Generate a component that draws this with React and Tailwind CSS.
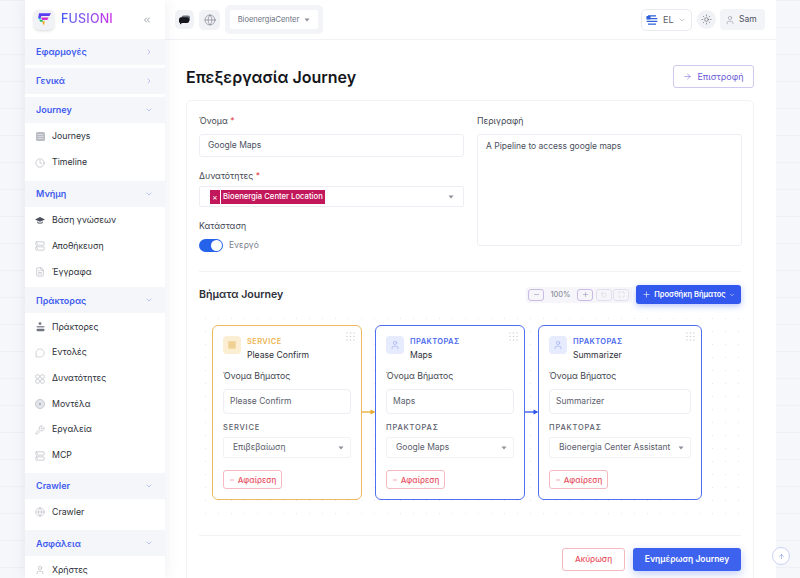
import React from 'react';
import {
  ChevronRight, ChevronDown, ChevronsLeft, Clock, FileText, MessageCircle, Wrench,
  Server, Globe, User, Sun, ArrowRight, Plus, Minus, RotateCcw, Maximize, ArrowUp,
} from 'lucide-react';

const RowsIcon = () => (
  <svg width="9" height="9" viewBox="0 0 9 9">
    <rect width="9" height="9" rx="1.5" fill="#b9bcc4" />
    <path d="M1.5 2.5h6M1.5 4.5h6M1.5 6.5h6" stroke="#e8e9ed" strokeWidth="0.6" />
  </svg>
);

const CapIcon = () => (
  <svg width="10" height="9" viewBox="0 0 10 9">
    <path d="M5 1 10 3.4 5 5.8 0 3.4Z" fill="#4b505c" />
    <path d="M2 5.3v1.6c1.8 1.3 4.2 1.3 6 0V5.3L5 6.8Z" fill="#8b8f9a" />
  </svg>
);

const AgentsIcon = () => (
  <svg width="9" height="10" viewBox="0 0 9 10">
    <circle cx="4" cy="1.6" r="1.4" fill="#6f7480" />
    <rect x="0.5" y="3.9" width="8" height="1.6" rx="0.8" fill="#8b8f9a" />
    <rect x="0.5" y="6.8" width="8" height="2.4" rx="1.2" fill="#6f7480" />
  </svg>
);

const CirclesIcon = () => (
  <svg width="10" height="10" viewBox="0 0 10 10" fill="none" stroke="#b9bcc4" strokeWidth="0.7">
    <circle cx="2.6" cy="2.6" r="2" />
    <circle cx="7.4" cy="2.6" r="2" />
    <circle cx="2.6" cy="7.4" r="2" />
    <circle cx="7.4" cy="7.4" r="2" />
  </svg>
);

const ModelIcon = () => (
  <svg width="10" height="10" viewBox="0 0 10 10">
    <circle cx="5" cy="5" r="4.6" fill="#e3e4e9" stroke="#b9bcc4" strokeWidth="0.7" />
    <circle cx="5" cy="5" r="0.9" fill="#9a9ea8" />
  </svg>
);

const LogoIcon = () => (
  <svg width="15" height="15" viewBox="0 0 15 15">
    <path d="M2 1.2h12L12.4 4H4.4L3.6 6H1.2Z" fill="#5b3df0" />
    <path d="M1.2 6h2.4l.8 1.6H2Z" fill="#19b5e8" />
    <path d="M4.2 5.4h7.4L10.2 8H5Z" fill="#d62fd0" />
    <path d="M2.4 8h3l1.2 1.8H3.2Z" fill="#22c55e" />
    <path d="M5.2 9.4h2.6L6.8 13.6Z" fill="#f59e0b" />
  </svg>
);

const ChatBlob = () => (
  <svg width="11" height="10" viewBox="0 0 11 10">
    <rect x="2.5" y="0.5" width="8.5" height="6" rx="2" fill="#6b7280" />
    <path d="M2.5 2.3h5.6a2 2 0 0 1 2 2v1.7a2 2 0 0 1-2 2H3L1 9.6V8A2 2 0 0 1 0 6V4.3a2 2 0 0 1 2.5-2Z" fill="#15171c" />
  </svg>
);

const FlagIcon = () => (
  <svg width="12" height="12" viewBox="0 0 12 12">
    <circle cx="6" cy="6" r="5.5" fill="#fff" />
    <path d="M2 1.9h8M.7 4.6h10.6M.7 7.4h10.6M2 10.1h8" stroke="#2f5fd8" strokeWidth="1.4" />
    <rect x="0.5" y="2" width="4" height="3.4" fill="#2f5fd8" />
  </svg>
);

const ServiceIcon = () => (
  <svg width="10" height="10" viewBox="0 0 10 10">
    <rect x="1" y="1" width="8" height="8" rx="1" fill="#f3d9a4" />
    <path d="M2 3h6M2 5h6M2 7h6" stroke="#e9c27a" strokeWidth="0.7" />
  </svg>
);

const GripDots = () => (
  <svg width="9" height="9" viewBox="0 0 9 9" fill="#c9ccd3">
    {[1, 4.5, 8].map((y) =>
      [1, 4.5, 8].map((x) => <rect key={`${x}-${y}`} x={x - 0.6} y={y - 0.6} width="1.2" height="1.2" />)
    )}
  </svg>
);

const Caret = () => (
  <svg width="6" height="4" viewBox="0 0 6 4" className="shrink-0">
    <path d="M0.5 0.5h5L3 3.5Z" fill="#8b8f9a" />
  </svg>
);

const iconCls = 'text-[#a9adb6]';

const menu = [
  { title: 'Εφαρμογές', open: false },
  { title: 'Γενικά', open: false },
  {
    title: 'Journey', open: true, pad: 'pb-[5.5px]', items: [
      { label: 'Journeys', icon: <RowsIcon /> },
      { label: 'Timeline', icon: <Clock size={10} strokeWidth={1.4} className={iconCls} /> },
    ],
  },
  {
    title: 'Μνήμη', open: true, pad: 'pb-[2.5px]', items: [
      { label: 'Βάση γνώσεων', icon: <CapIcon /> },
      { label: 'Αποθήκευση', icon: <Server size={10} strokeWidth={1.4} className={iconCls} /> },
      { label: 'Έγγραφα', icon: <FileText size={10} strokeWidth={1.4} className={iconCls} /> },
    ],
  },
  {
    title: 'Πράκτορας', open: true, pad: 'pb-[4px]', items: [
      { label: 'Πράκτορες', icon: <AgentsIcon /> },
      { label: 'Εντολές', icon: <MessageCircle size={10} strokeWidth={1.2} className={iconCls} /> },
      { label: 'Δυνατότητες', icon: <CirclesIcon /> },
      { label: 'Μοντέλα', icon: <ModelIcon /> },
      { label: 'Εργαλεία', icon: <Wrench size={10} strokeWidth={1.4} className={iconCls} /> },
      { label: 'MCP', icon: <Server size={10} strokeWidth={1.4} className={iconCls} /> },
    ],
  },
  {
    title: 'Crawler', open: true, pad: 'pb-[5px]', items: [
      { label: 'Crawler', icon: <Globe size={10} strokeWidth={1.2} className={iconCls} /> },
    ],
  },
  {
    title: 'Ασφάλεια', open: true, pad: 'pb-[6px]', items: [
      { label: 'Χρήστες', icon: <User size={10} strokeWidth={1.4} className={iconCls} /> },
    ],
  },
];

const steps = [
  {
    kind: 'SERVICE', name: 'Please Confirm', selectLabel: 'SERVICE', selected: 'Επιβεβαίωση', width: 'w-[149.5px]',
    border: 'border-[#ecb95f]', kindColor: 'text-[#edb44f]', iconBox: 'bg-[#fbeed3]', service: true,
  },
  {
    kind: 'ΠΡΑΚΤΟΡΑΣ', name: 'Maps', selectLabel: 'ΠΡΑΚΤΟΡΑΣ', selected: 'Google Maps', width: 'w-[149.5px]',
    border: 'border-[#4f6ef0]', kindColor: 'text-[#4a69ee]', iconBox: 'bg-[#e6ebfd]',
  },
  {
    kind: 'ΠΡΑΚΤΟΡΑΣ', name: 'Summarizer', selectLabel: 'ΠΡΑΚΤΟΡΑΣ', selected: 'Bioenergia Center Assistant', width: 'w-[164px]',
    border: 'border-[#4f6ef0]', kindColor: 'text-[#4a69ee]', iconBox: 'bg-[#e6ebfd]',
  },
];

const Sidebar = () => (
  <aside className="w-[140px] h-[578px] shrink-0 bg-white overflow-hidden shadow-[0_0_14px_rgba(80,90,130,0.10)] z-10">
    <div className="h-[39px] flex items-center pl-[9px] pr-[13px]">
      <div className="w-[20px] h-[20px] rounded-[5px] bg-[#f1f2f5] shadow-[0_1px_3px_rgba(0,0,0,0.15)] flex items-center justify-center">
        <LogoIcon />
      </div>
      <span className="ml-[7px] text-[12.5px] font-medium tracking-[0.2px] bg-linear-to-r from-[#3f5cf6] to-[#c92fe6] bg-clip-text text-transparent">
        FUSIONI
      </span>
      <ChevronsLeft size={10} strokeWidth={1.6} className="ml-auto text-[#6b7280]" />
    </div>
    {menu.map((section) => (
      <div key={section.title} className={section.open ? '' : 'mb-[3px]'}>
        <div className="h-[26px] bg-[#f5f6fa] flex items-center justify-between pl-[11px] pr-[12px]">
          <span className="text-[9px] font-semibold text-[#3f5cf0]">{section.title}</span>
          {section.open
            ? <ChevronDown size={8} className="text-[#9aa7f0]" />
            : <ChevronRight size={8} className="text-[#9aa7f0]" />}
        </div>
        {section.items && (
          <div className={`pt-[1px] ${section.pad}`}>
            {section.items.map((item) => (
              <div key={item.label} className="h-[25.7px] flex items-center pl-[10px]">
                <span className="w-[10px] flex justify-center">{item.icon}</span>
                <span className="ml-[7px] text-[8.75px] text-[#2d3038]">{item.label}</span>
              </div>
            ))}
          </div>
        )}
      </div>
    ))}
  </aside>
);

const TopBar = () => (
  <header className="h-[40px] shrink-0 flex items-center border-b border-[#f1f2f6] pl-[10px] pr-[11px]">
    <div className="w-[19px] h-[19px] rounded-[5px] bg-[#f1f2f6] flex items-center justify-center">
      <ChatBlob />
    </div>
    <div className="ml-[5px] w-[21px] h-[20px] rounded-[5px] bg-[#f1f2f6] flex items-center justify-center">
      <Globe size={12} strokeWidth={1} className="text-[#5b606c]" />
    </div>
    <div className="ml-[5px] p-[5px] rounded-[5px] bg-[#f3f4f8]">
      <div className="w-[88px] h-[19px] bg-white rounded-[2px] flex items-center justify-center gap-[5px]">
        <span className="text-[7.5px] text-[#6b7280]">BioenergiaCenter</span>
        <Caret />
      </div>
    </div>
    <div className="ml-auto w-[51px] h-[22px] border border-[#e9ebf0] rounded-[5px] flex items-center pl-[4px] pr-[5px]">
      <FlagIcon />
      <span className="ml-[5px] text-[9px] text-[#5b606c]">EL</span>
      <ChevronDown size={8} className="ml-auto text-[#a9adb6]" />
    </div>
    <div className="ml-[5px] w-[19px] h-[19px] rounded-full bg-[#f1f2f6] flex items-center justify-center">
      <Sun size={11} strokeWidth={1.2} className="text-[#4b5060]" />
    </div>
    <div className="ml-[4px] w-[45px] h-[21px] rounded-[4px] bg-[#f3f4f8] flex items-center pl-[5px]">
      <User size={10} strokeWidth={1.3} className="text-[#8b8f9a]" />
      <span className="ml-[4px] text-[8.5px] text-[#4b5060]">Sam</span>
    </div>
  </header>
);

const Field = ({ label, required, className, children }) => (
  <div className={className}>
    <label className="block text-[8.75px] leading-[12px] text-[#444852]">
      {label}{required && <span className="text-[#e5484d]"> *</span>}
    </label>
    {children}
  </div>
);

const StepCard = ({ step }) => (
  <div className={`${step.width} h-[175px] shrink-0 relative border-[1.5px] ${step.border} rounded-[6px] bg-white pt-[10px] px-[10px]`}>
    <span className="absolute top-[6px] right-[6px]"><GripDots /></span>
    <div className="flex items-start gap-[6px]">
      <div className={`w-[18px] h-[18px] rounded-[4px] ${step.iconBox} flex items-center justify-center`}>
        {step.service
          ? <ServiceIcon />
          : <User size={10} strokeWidth={1.3} className="text-[#8ea1f2]" />}
      </div>
      <div>
        <div className={`text-[7.5px] leading-[12px] font-semibold tracking-[0.4px] ${step.kindColor}`}>{step.kind}</div>
        <div className="text-[8.6px] leading-[14px] text-[#2d3038]">{step.name}</div>
      </div>
    </div>
    <div className="mt-[8px] text-[8.75px] leading-[12px] text-[#444852]">Όνομα Βήματος</div>
    <div className="mt-[7px] h-[25px] border border-[#eceef3] rounded-[4px] flex items-center pl-[6px] text-[8.5px] text-[#5b606c]">
      {step.name}
    </div>
    <div className="mt-[8px] text-[7.5px] leading-[11px] font-medium tracking-[0.8px] text-[#5b606c]">{step.selectLabel}</div>
    <div className="mt-[4px] h-[21px] border border-[#f1f2f6] rounded-[2px] flex items-center justify-between pl-[9px] pr-[6px] text-[8.5px] text-[#5b606c] whitespace-nowrap">
      {step.selected}
      <Caret />
    </div>
    <button className="mt-[12px] w-[59px] h-[19px] border border-[#f6b9bf] rounded-[3px] flex items-center justify-center gap-[3px] text-[8px] font-medium text-[#e8505f]">
      <Minus size={6} strokeWidth={2} />
      Αφαίρεση
    </button>
  </div>
);

const Connector = ({ color }) => (
  <svg width="13.5" height="6" viewBox="0 0 13.5 6" className="shrink-0 mt-[84px]">
    <path d="M0 3h10" stroke={color} strokeWidth="1.3" />
    <path d="M8.5 0.5 13.5 3 8.5 5.5Z" fill={color} />
  </svg>
);

const ZoomBtn = ({ children, dim, className }) => (
  <span className={`w-[16px] h-[12px] border rounded-[3px] flex items-center justify-center ${className} ${dim ? 'border-[#e2deee] text-[#cfd2da]' : 'border-[#cbb9e6] text-[#9a93b5]'}`}>
    {children}
  </span>
);

export default function App() {
  return (
    <div className="w-[800px] h-[578px] overflow-hidden flex pl-[25px] font-[Inter,sans-serif] bg-[#f6f7fb] bg-[linear-gradient(#eef0f8_1px,transparent_1px)] bg-[size:100%_27px] relative">
      <Sidebar />
      <main className="w-[611px] h-[578px] shrink-0 flex flex-col bg-white">
        <TopBar />
        <div className="pl-[21px] pr-[22px]">
          <div className="h-[60px] flex items-center justify-between pt-[13px]">
            <h1 className="text-[16px] font-semibold text-[#14161b]">Επεξεργασία Journey</h1>
            <button className="w-[81px] h-[23px] border border-[#cfc8ef] rounded-[3px] flex items-center justify-center gap-[5px] text-[9px] text-[#6a5bd6]">
              <ArrowRight size={9} strokeWidth={1.4} />
              Επιστροφή
            </button>
          </div>
          <section className="border border-[#f1f2f6] rounded-[5px] h-[500px] pt-[14px] px-[12px]">
            <div className="grid grid-cols-[265px_265px] gap-x-[13px]">
              <div>
                <Field label="Όνομα" required>
                  <div className="mt-[7px] h-[23px] border border-[#eceef3] rounded-[3px] flex items-center pl-[8px] text-[8.5px] text-[#4b5060]">
                    Google Maps
                  </div>
                </Field>
                <Field label="Δυνατότητες" required className="mt-[13px]">
                  <div className="mt-[4px] h-[21px] border border-[#eceef3] rounded-[2px] flex items-center pl-[10px] pr-[9px]">
                    <span className="h-[14px] w-[10px] bg-[#c2185b] text-white text-[8px] flex items-center justify-center">×</span>
                    <span className="ml-[1px] h-[14px] px-[2px] bg-[#c2185b] text-white text-[7.7px] leading-[14px] font-medium whitespace-nowrap">
                      Bioenergia Center Location
                    </span>
                    <span className="ml-auto"><Caret /></span>
                  </div>
                </Field>
                <Field label="Κατάσταση" className="mt-[13px]">
                  <div className="mt-[7px] flex items-center">
                    <span className="w-[24px] h-[13px] rounded-full bg-[#2563eb] flex items-center justify-end pr-[1px]">
                      <span className="w-[11px] h-[11px] rounded-full bg-white" />
                    </span>
                    <span className="ml-[6px] text-[8.5px] text-[#7b7f8a]">Ενεργό</span>
                  </div>
                </Field>
              </div>
              <Field label="Περιγραφή">
                <div className="mt-[7px] h-[112px] border border-[#eceef3] rounded-[3px] pl-[8px] pt-[5px] text-[8.5px] text-[#4b5060]">
                  A Pipeline to access google maps
                </div>
              </Field>
            </div>

            <div className="mt-[19px] border-t border-[#f1f2f6] pt-[9px] flex items-center justify-between h-[37px]">
              <h2 className="text-[10.6px] font-semibold text-[#2d3038]">Βήματα Journey</h2>
              <div className="flex items-center gap-[4px]">
                <div className="h-[16px] rounded-[3px] bg-[#f6f6fa] flex items-center pl-[2px] pr-[3px]">
                  <ZoomBtn><Minus size={7} /></ZoomBtn>
                  <span className="w-[33px] text-center text-[7.5px] text-[#7b7f8a]">100%</span>
                  <ZoomBtn><Plus size={7} /></ZoomBtn>
                  <ZoomBtn dim className="ml-[3px]"><RotateCcw size={6} /></ZoomBtn>
                  <ZoomBtn dim className="ml-[1px]"><Maximize size={7} /></ZoomBtn>
                </div>
                <button className="w-[105px] h-[19px] rounded-[3px] bg-[#3358ee] shadow-[0_2px_6px_rgba(51,88,238,0.35)] flex items-center justify-center gap-[3px] text-[7.5px] font-semibold text-white whitespace-nowrap">
                  <Plus size={9} strokeWidth={1.6} />
                  Προσθήκη Βήματος
                  <ChevronDown size={6} />
                </button>
              </div>
            </div>

            <div className="mt-[4px] h-[213px] pt-[13px] pl-[13px] flex items-start bg-[radial-gradient(#e4e6ec_0.6px,transparent_0.7px)] bg-[size:13px_13px]">
              <StepCard step={steps[0]} />
              <Connector color="#e5a92e" />
              <StepCard step={steps[1]} />
              <Connector color="#2f55e8" />
              <StepCard step={steps[2]} />
            </div>

            <div className="mt-[10px] border-t border-[#f1f2f6] pt-[12px] flex justify-end gap-[8px]">
              <button className="w-[63px] h-[23px] border border-[#f6b9bf] rounded-[3px] text-[8.2px] font-medium text-[#e8505f]">Ακύρωση</button>
              <button className="w-[108px] h-[23px] rounded-[3px] bg-[#3d63ee] shadow-[0_3px_8px_rgba(51,88,238,0.3)] text-[8.5px] font-semibold text-white">Ενημέρωση Journey</button>
            </div>
          </section>
        </div>
      </main>
      <button className="absolute left-[772px] top-[547px] w-[18px] h-[18px] rounded-full border border-[#c9d2f6] bg-white flex items-center justify-center text-[#7f92e8]">
        <ArrowUp size={7} strokeWidth={2} />
      </button>
    </div>
  );
}
